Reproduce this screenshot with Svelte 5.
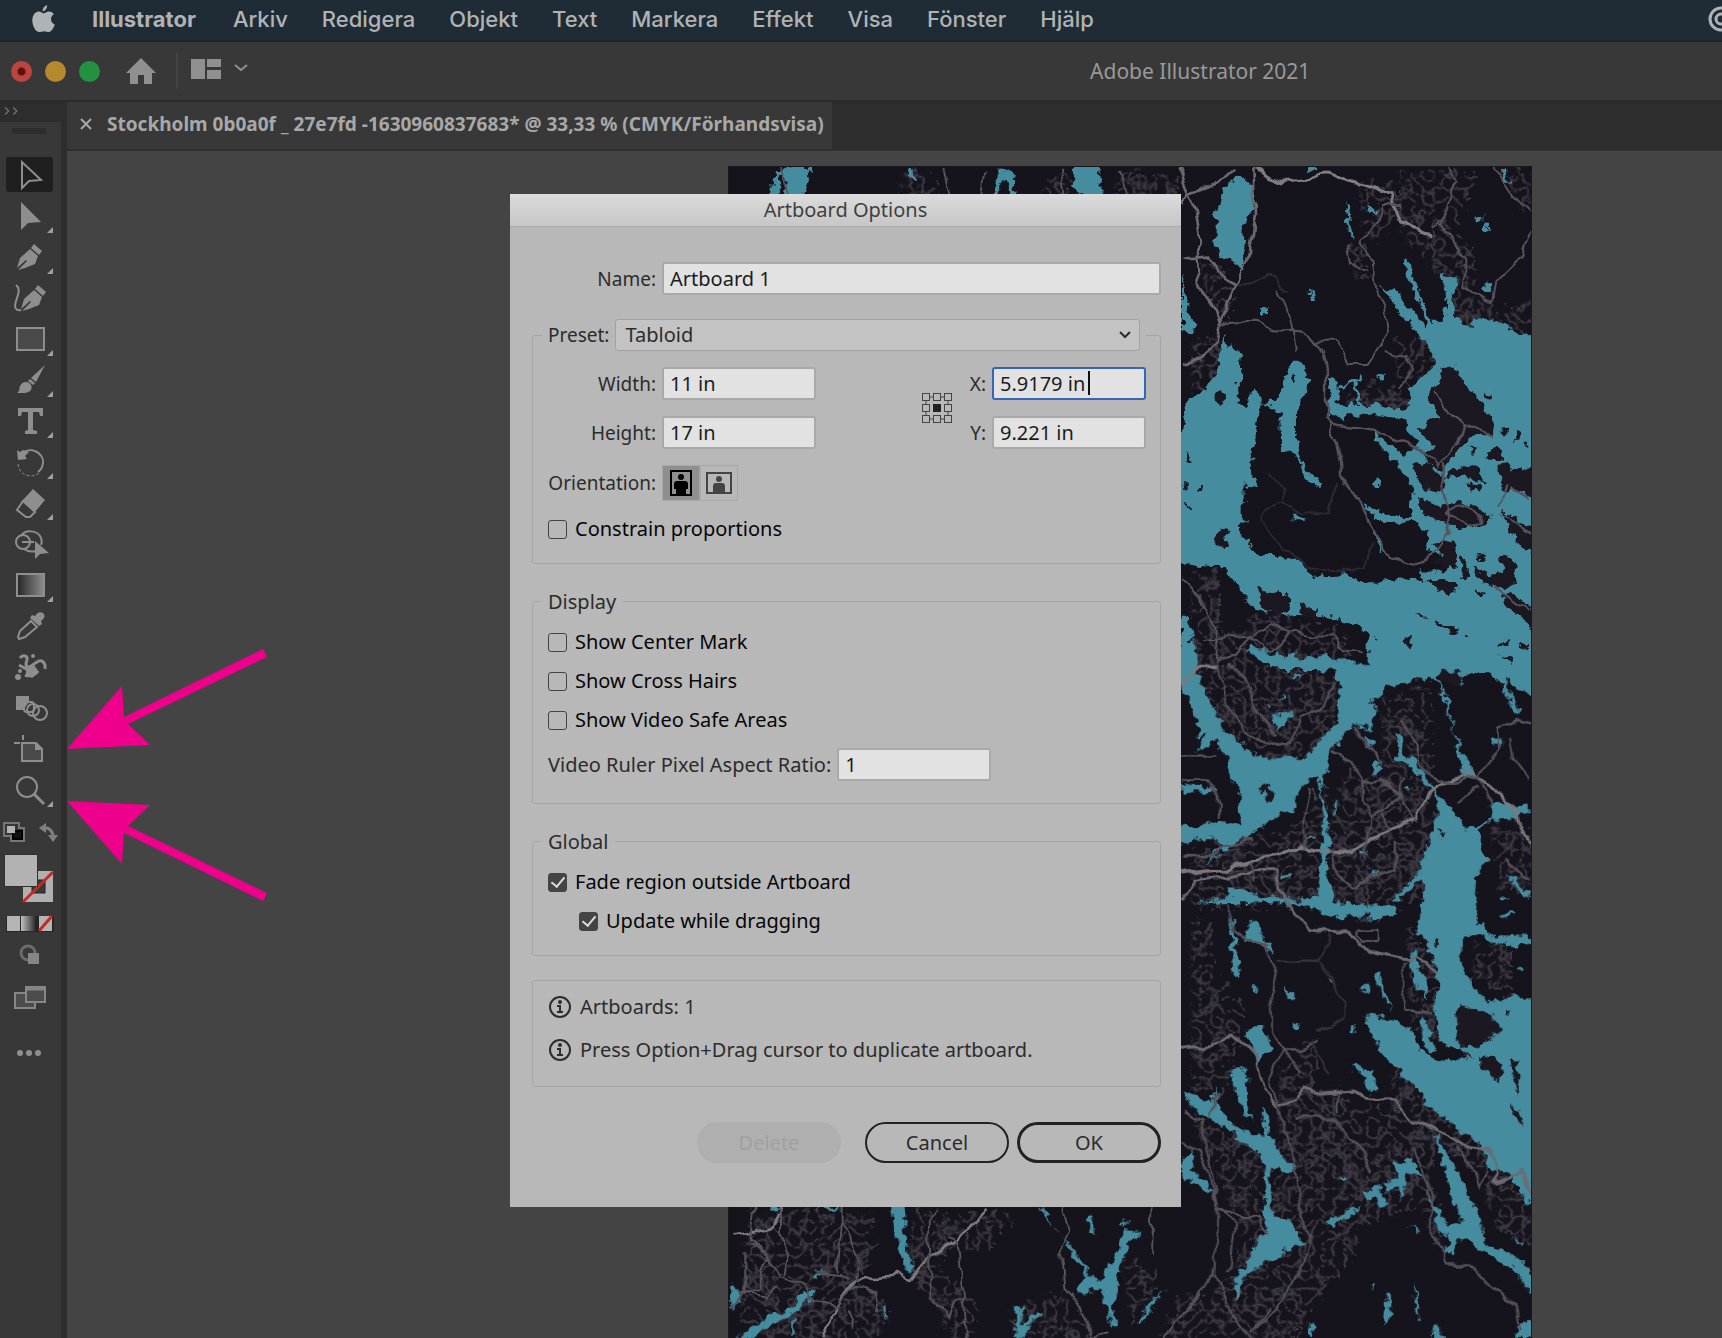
<script>
    let artboard = $state({
        name: 'Artboard 1',
        preset: 'Tabloid',
        width: '11 in',
        height: '17 in',
        x: '5.9179 in',
        y: '9.221 in',
        ratio: '1'
    });

    let orientation = $state('portrait');
    let activeTool = $state('Direct selection');

    let menus = ['Arkiv', 'Redigera', 'Objekt', 'Text', 'Markera', 'Effekt', 'Visa', 'Fönster', 'Hjälp'];
    let presets = ['Tabloid', 'Letter', 'Legal', 'A4', 'A3'];

    let display = $state([
        { label: 'Show Center Mark', on: false },
        { label: 'Show Cross Hairs', on: false },
        { label: 'Show Video Safe Areas', on: false }
    ]);
    let constrain = $state(false);
    let fade = $state(true);
    let update = $state(true);

    const nib = '<path d="M20 3l8 7-3 4-8-7z"/><path d="M16 8l8 7-3 8-10 4-7 2 9-9-1-1-9 8 3-10z"/>';

    // 32x32 icons, filled with the current colour
    const tools = [
        { name: 'Direct selection', icon: '<path d="M8 3v26l7-7 12-1z" fill="none" stroke="currentColor" stroke-width="2"/>' },
        { name: 'Selection', more: true, icon: '<path d="M7 2v28l7-7 13-1z"/>' },
        { name: 'Pen', more: true, icon: nib },
        { name: 'Curvature', icon: `<g transform="translate(4 0)">${nib}</g><path d="M2 3c5 4 2 10 0 16s-1 10 5 9" fill="none" stroke="currentColor" stroke-width="2"/>` },
        { name: 'Rectangle', more: true, icon: '<rect x="3" y="5" width="27" height="22" fill="#4a4a4a" stroke="currentColor" stroke-width="2"/>' },
        { name: 'Paintbrush', more: true, icon: '<path d="M31 1L22 18l-5-4zM16 15l5 4-2 2-5-4zM12 18c4 0 7 4 5 8-3 4-9 3-14 3 3-2 2-4 3-7 1-2 3-4 6-4z"/>' },
        { name: 'Type', more: true, icon: '<path d="M4 3h25v8h-3l-1-4h-6v18l4 1v3H11v-3l3-1V7H8l-1 4H4z"/>' },
        { name: 'Rotate', more: true, icon: '<path d="M10 6c10-6 23 4 18 15-1 3-3 4-4 5" fill="none" stroke="currentColor" stroke-width="2"/><path d="M3 4l1 10 9-1-2-3 4-4-6-2-3 2z"/><path d="M4 18c1 13 16 15 22 8" fill="none" stroke="currentColor" stroke-width="1" stroke-dasharray="3 2"/>' },
        { name: 'Eraser', more: true, icon: '<path d="M19 2l12 11-10 12L8 14z"/><path d="M9 14l12 11-5 5h-4L3 23z" fill="none" stroke="currentColor" stroke-width="2"/>' },
        { name: 'Shape builder', icon: '<g fill="none" stroke="currentColor" stroke-width="2"><circle cx="9" cy="14" r="7"/><path d="M7 8c4-7 17-6 20 2 1 3 1 5 0 7M10 21c4 3 8 3 12 2M8 14h12"/></g><path d="M21 13v18l5-5 9-1z"/>' },
        { name: 'Gradient', more: true, icon: '<defs><linearGradient id="ramp"><stop offset="0" stop-color="#262626"/><stop offset="1" stop-color="#8e8e8e"/></linearGradient></defs><rect x="3" y="5" width="27" height="22" fill="url(#ramp)" stroke="currentColor" stroke-width="2"/>' },
        { name: 'Eyedropper', icon: '<path d="M29 3c3 3 1 6-2 8l1 3-3 2-9-8 2-3 3 1c2-3 5-5 8-3z"/><path d="M17 11l6 6-12 10-6 2-1-2 2-6z" fill="none" stroke="currentColor" stroke-width="2"/>' },
        { name: 'Symbol sprayer', icon: '<path d="M6 7c3-4 8-2 7 2-2 5-1 9 4 6l6-4c4-3 9 0 8 7M5 14l9 5M11 24c5 2 10 0 13-4" fill="none" stroke="currentColor" stroke-width="3"/><path d="M12 17l8-3 5 7-7 6-6-4z"/><circle cx="19" cy="5" r="2"/><circle cx="4" cy="26" r="3"/><circle cx="6" cy="20" r="2"/>' },
        { name: 'Blend', icon: '<path d="M2 4h13v6l-6 8H2z"/><g fill="none" stroke="currentColor" stroke-width="2"><rect x="10" y="10" width="10" height="10" rx="3"/><circle cx="19" cy="18" r="6"/><circle cx="26" cy="21" r="7"/></g>' },
        { name: 'Artboard', icon: '<path d="M8 10h14l6 6v12H8z" fill="#4a4a4a" stroke="currentColor" stroke-width="2"/><path d="M21 9v8h8z"/><path d="M0 10h6M9 2v5" fill="none" stroke="currentColor" stroke-width="2"/>' },
        { name: 'Zoom', more: true, icon: '<circle cx="13" cy="13" r="10" fill="none" stroke="currentColor" stroke-width="2"/><path d="M20 20l10 10" stroke="currentColor" stroke-width="3"/>' }
    ];
</script>

<div class="screen">
    <nav class="menubar">
        <svg class="apple" viewBox="0 0 24 30" aria-hidden="true">
            <path d="M16 0c0 4-2 6-5 7 0-4 2-6 5-7zM12 9c2 0 3-2 6-2 2 0 4 1 5 3-4 2-4 9 1 11-1 4-4 8-6 8s-3-1-5-1-4 1-6 1C3 29 0 21 0 17 0 9 5 7 7 7s4 2 5 2z" />
        </svg>
        <a href="#app" class="app-name">Illustrator</a>
        {#each menus as menu}
            <a href="#{menu}">{menu}</a>
        {/each}
        <svg class="cc" viewBox="0 0 26 26" aria-hidden="true">
            <circle cx="13" cy="13" r="11" fill="none" stroke="currentColor" stroke-width="3" />
            <circle cx="13" cy="13" r="5" fill="none" stroke="currentColor" stroke-width="3" />
        </svg>
    </nav>

    <header class="titlebar">
        <div class="title-left">
            <span class="light red"></span>
            <span class="light yellow"></span>
            <span class="light green"></span>
            <svg class="home" viewBox="0 0 30 26" aria-hidden="true">
                <path d="M15 0l15 15h-4v11h-8v-9h-6v9H4V15H0z" />
            </svg>
            <span class="divider"></span>
            <svg class="workspace" viewBox="0 0 30 20" aria-hidden="true">
                <path d="M0 0h14v20H0zM16 0h14v8H16zM16 11h14v9H16z" />
            </svg>
            <svg class="caret" viewBox="0 0 14 8" aria-hidden="true">
                <path d="M1 1l6 5 6-5" fill="none" stroke="currentColor" stroke-width="2" />
            </svg>
        </div>
        <span class="title">Adobe Illustrator 2021</span>
    </header>

    <div class="workbench">
        <aside class="toolbar">
            <div class="expand">
                <svg viewBox="0 0 12 8" aria-hidden="true">
                    <path d="M1 1l3 3-3 3M8 1l3 3-3 3" fill="none" stroke="currentColor" />
                </svg>
            </div>
            <div class="panel">
                <span class="grip"></span>
                <div class="tools">
                    {#each tools as tool}
                        <button
                            class="tool"
                            class:active={activeTool === tool.name}
                            class:more={tool.more}
                            aria-label={tool.name}
                            onclick={() => (activeTool = tool.name)}
                        >
                            <svg viewBox="0 0 32 32" aria-hidden="true">{@html tool.icon}</svg>
                        </button>
                    {/each}
                </div>
                <!-- default colours, swap, fill and stroke, fill kind -->
                <svg class="swatches" viewBox="0 0 60 112" aria-hidden="true">
                    <path d="M4 2h15v5h5v13H11v-5H4z" fill="none" stroke="#777" stroke-width="2" />
                    <path d="M13 10h9v8h-9z" fill="#111" stroke="#000" stroke-width="2" />
                    <path d="M7 5h8v7H7z" fill="#b4b4b4" />
                    <path d="M43 7c6-1 10 3 10 9" fill="none" stroke="#808080" stroke-width="3" />
                    <path d="M39 7l7-5v10zM48 14h10l-5 7z" fill="#808080" />
                    <rect x="23" y="50" width="30" height="31" fill="#b0b0b0" />
                    <rect x="32" y="59" width="13" height="13" fill="#383838" stroke="#222" />
                    <path d="M23 81l30-30" stroke="#c22b25" stroke-width="3" />
                    <rect x="4" y="33" width="34" height="33" fill="#303030" />
                    <rect x="5" y="34" width="32" height="31" fill="#b2b2b2" />
                    <defs>
                        <linearGradient id="fade">
                            <stop offset="0" stop-color="#c0c0c0" />
                            <stop offset="1" stop-color="#333" />
                        </linearGradient>
                    </defs>
                    <rect x="6" y="95" width="48" height="16" fill="#262626" />
                    <rect x="7" y="95" width="13" height="15" fill="#b4b4b4" />
                    <rect x="21" y="95" width="14" height="15" fill="url(#fade)" />
                    <rect x="39" y="95" width="13" height="15" fill="#b4b4b4" />
                    <path d="M39 110l13-15" stroke="#c22b25" stroke-width="3" />
                </svg>
                <svg class="modes" viewBox="0 0 60 122" aria-hidden="true">
                    <circle cx="28" cy="12" r="7" fill="none" stroke="#6c6c6c" stroke-width="3" />
                    <path d="M28 12h11v11H28z" fill="#868686" />
                    <g fill="#4c4c4c" stroke="#868686" stroke-width="2">
                        <path d="M15 52h20v15H15z" />
                        <path d="M26 46h19v15H26z" />
                        <path d="M26 48h19" stroke-width="3" />
                    </g>
                    <g fill="#909090">
                        <circle cx="20" cy="112" r="3" />
                        <circle cx="29" cy="112" r="3" />
                        <circle cx="38" cy="112" r="3" />
                    </g>
                </svg>
            </div>
        </aside>

        <main class="document">
            <div class="tabs">
                <div class="tab">
                    <button class="close" aria-label="Close tab">
                        <svg viewBox="0 0 12 12" aria-hidden="true">
                            <path d="M1 1l10 10M11 1L1 11" stroke="currentColor" stroke-width="2" />
                        </svg>
                    </button>
                    <span>Stockholm 0b0a0f _ 27e7fd -1630960837683* @ 33,33 % (CMYK/Förhandsvisa)</span>
                </div>
            </div>

            <div class="canvas">
                <svg class="map" viewBox="728 167 804 1171" preserveAspectRatio="xMinYMin slice" role="img" aria-label="Map of Stockholm">
                    <defs>
                        <filter id="rough" x="-5%" y="-5%" width="110%" height="110%" color-interpolation-filters="sRGB">
                            <feTurbulence type="fractalNoise" baseFrequency="0.11" numOctaves="3" seed="4" />
                            <feDisplacementMap in="SourceGraphic" scale="12" xChannelSelector="R" yChannelSelector="G" />
                        </filter>
                        <filter id="wobble" x="-5%" y="-5%" width="110%" height="110%" color-interpolation-filters="sRGB">
                            <feTurbulence type="fractalNoise" baseFrequency="0.05" numOctaves="2" seed="9" />
                            <feDisplacementMap in="SourceGraphic" scale="12" xChannelSelector="R" yChannelSelector="G" />
                        </filter>
                        <!-- thin veins of noise, kept inside the blocks -->
                        <filter id="streets" x="-5%" y="-5%" width="110%" height="110%" color-interpolation-filters="sRGB">
                            <feTurbulence type="turbulence" baseFrequency="0.09" numOctaves="2" seed="7" result="noise" />
                            <feColorMatrix in="noise" values="0 0 0 0 0.25  0 0 0 0 0.23  0 0 0 0 0.27  -4 0 0 0 1.1" result="veins" />
                            <feDisplacementMap in="SourceGraphic" in2="noise" scale="24" xChannelSelector="R" yChannelSelector="G" result="blocks" />
                            <feComposite in="veins" in2="blocks" operator="in" />
                        </filter>
                    </defs>
                    <rect x="728" y="167" width="804" height="1171" fill="#15131c" />

                    <!-- built-up areas -->
                    <g filter="url(#streets)">
                        <g transform="translate(1170 150) scale(.3333)">
                            <path d="M-380 50h120l20 90h-200zM-180 50h180l-20 90h-190zM-830 50h80l40 90h-140z" />
                            <path d="M660 50h120l20 170 70 40 20 110-20 40 90 60 110-40v140l-170-40-60 0-60-170-60-60-60-80z" />
                            <path d="M760 50h130l-50 150-60-30zM970 50h110v140l-50-30zM540 90h110l20 80-90 90-40-60zM640 550l80-10 70 60-10 60-60 40-70-40z" />
                            <path d="M33 550h70l40 60-40 110-70-10zM60 310l70 20 50 80-40 80-60-70zM500 720l80-40 140 40-20 60-200-10z" />
                            <path d="M33 1250l80 0 10 180 140-60 180 40 60 20 10 100-80 100H33zM500 270h60l20 90-50 20z" />
                        </g>
                        <g transform="translate(1170 650) scale(.3333 .4388)">
                            <path d="M100 0h300l120 50-50 150-140 60-150-20-100-100zM600 100l130-30 40 180-40 80 60 40-60 180-150 50-120-10-10-260 60-60 100 0z" />
                            <path d="M33 450l300-60 110-90v270H33zM33 600h60l20 130 80 60-20 110-30 90H33zM680 600l80 100 40 170-100 0-20-150zM690 60l60 10 10 160-50-40z" />
                            <path d="M40 1060l110 10 140 50 20-120 90-20 200 50 150 20 230 110-110 10-100-50-60 130-190 50-170 180-40 70-210 -10 90-230z" />
                            <path d="M300 930l90-50 30 60-50 60-80 60zM640 920l170 100 120 100 60 80 80 50v100l-120-50-60-130-180-90-80-30zM930 390h150v160l-130-20zM880 650l110 0 10 140-120-60zM880 810l110 20-60 80-80 10z" />
                            <path d="M0 1568l130-150 120 0 240-120 60 40-130 120-90 110zM730 1130l60 150-20 80-60-140z" />
                        </g>
                        <g transform="translate(700 1190) scale(.3333)">
                            <path d="M120 50h160l200 0 20 80-40 130 80 80-50 104H90V220zM610 50h240l60 20-80 90-90-10-60 60 120 110-10 124h-60l-60-130-80-70zM890 350l120-50 80 0 60 144H920zM1240 190l100 40v90l-80 70zM1400 300h100v144h-160z" />
                        </g>
                    </g>

                    <!-- water -->
                    <g filter="url(#rough)" fill="#468c9f">
                        <g transform="translate(1170 150) scale(.3333)">
                            <path d="M-1205 140l20-75 32-15h70l-8 50-20 40h-50l5-60-15 0-15 60zM-798 50h25l5 45-12-5zM-535 140l15-80 40-8 15 88h-18l-12-50-20 10-2 40zM-300 50h85l12 90h-78z" />
                            <path d="M205 80c30 10 45 50 46 95-20 25-40 50-36 85 8 35-4 70-8 100l-22-30-45-20-7-30 2-90 17-40 8-40z" />
                            <path d="M33 370l12 80 27 95-39 5z" />
                            <path d="M20 850L45 830 42 780 55 735 110 725 120 690 145 650 150 580 155 545 168 600 195 590 212 630 208 670 200 700 205 760 225 775 245 715 272 722 268 760 255 850 250 905 238 940 245 970 268 1015 235 1010 218 1000 218 1110 205 1130 220 1165 260 1215 330 1215 400 1240 415 1275 530 1270 570 1300 700 1285 760 1290 745 1265 830 1265 850 1230 765 1195 770 1145 725 1115 640 1115 600 1095 575 1065 620 1080 645 1100 725 1102 720 1080 722 1010 690 950 630 890 608 840 650 875 690 910 720 905 745 870 720 850 695 808 620 795 560 800 470 795 478 675 500 700 500 765 620 765 700 780 722 760 710 710 740 690 790 650 790 605 740 550 690 495 632 412 690 425 700 460 740 500 765 540 755 480 700 360 705 320 720 350 745 430 778 515 818 515 825 430 805 370 860 380 860 410 845 430 850 500 910 540 905 510 960 505 1000 520 1050 555 1095 550 1095 1570 590 1570 590 1450 560 1420 470 1405 400 1390 340 1395 270 1385 240 1370 190 1290 150 1255 20 1240z" />
                            <path d="M272 755l45-5 20-50 25-65 35 0 8 30-10 25 25 0-20 40-25 40 0 90 10 60 30 50 35 30-5 15-40-25-30-80-45-10-2-110-30-15z" />
                            <path d="M500 720l70-50 5 10-60 40zM545 690l10-3 15 80-10 3zM612 685l30-15 0 20zM525 180l8-20 12 100-12-20zM412 422l12-5 8 30-10 0zM273 472h18v20h-18zM368 1100h42v14h-42zM610 990h16v18h-16zM935 425l10-35 20 15-5 20zM990 60l14 0 10 40-14-10zM914 198h20v20h-20zM938 218h16v24h-16zM412 55l16-5 0 12-16 5zM600 170l22 18-4 6-20-16zM615 1150l8 0 8 60-8-10z" />
                            <path d="M33 1390l20 20 20 100-10 60H20zM230 1490l60 25 60 5 20-25 0 30 60 5 40-20 10 20 60 15 0 15-200 0-60-20z" />
                        </g>
                        <g transform="translate(1170 650) scale(.3333 .4388)">
                            <path d="M20 0L75 0 80 60 120 120 150 170 220 220 260 245 400 248 440 210 480 180 505 150 505 80 490 50 430 40 300 35 230 5 235-10 340 20 400 22 440 10 480 20 590 35 600-20 1095-20 1095 115 1040 90 1005 60 1010 85 1050 145 1030 140 1000 85 950 45 900 50 870 75 850 60 800 60 830 110 850 190 880 240 918 290 880 295 865 240 845 180 820 110 800 70 740 60 720 75 650 85 610 110 600 130 630 135 600 155 605 180 560 170 540 175 500 215 475 235 470 280 455 300 450 330 470 390 475 440 465 500 480 540 485 570 560 580 670 580 670 605 590 615 560 605 490 612 460 600 400 580 270 575 60 575 180 565 165 535 280 560 390 570 440 560 450 480 455 420 445 310 440 290 410 300 370 330 370 370 330 375 280 400 200 440 150 460 90 500 160 440 120 425 20 445 20 395 60 405 150 390 215 395 200 370 210 330 180 290 165 230 130 210 70 240 110 190 80 200 80 160 50 110 20 80z" />
                            <path d="M678 185L690 190 700 230 730 255 800 330 860 380 880 405 920 400 960 380 965 350 1070 355 1070 370 1020 385 960 385 920 410 930 450 950 480 920 510 915 560 925 590 915 620 940 625 960 650 1095 652 1095 668 1015 675 950 660 930 645 880 655 865 710 900 760 950 800 1000 800 1020 785 1095 800 1095 1285 1010 1190 975 1185 950 1180 930 1130 860 1090 770 1035 730 990 640 930 610 890 580 840 600 828 640 840 720 860 750 910 790 935 900 930 870 905 830 905 800 870 790 790 810 760 780 700 760 660 730 640 750 610 755 550 745 500 770 450 800 370 795 335 740 285 700 250 678 245z" />
                            <path d="M665 570l40-30 40-40 5 20-40 35-40 20zM712 700l25-12 10 40 25 40-5 30-30-30zM750 835l15 5 10 40 20 35-15 5-25-30zM605 255l25 5-4 22-18 5zM580 195l18 10 10 15-20 0z" />
                            <path d="M33 300l100 15-5 10-95-5zM300 155l70-15 0 8-45 30-10 12zM330 515l28-4-5 12h-25zM487 350l12-10-5 40-5-5z" />
                            <path d="M175 610l10 0 10 60 15 55-8 25-22-10 8-20-8-60zM235 620h20l10 25 25 15 15 35-50-30-35-5zM215 880l30-25 30 0 25 55-25 10-10 25-15-15-5-35zM180 960l25-10 20 10 5 30 0 30 10 50-20-10-25-55z" />
                            <path d="M38 1005L70 1018 120 1030 130 995 140 1030 160 1060 210 1095 280 1110 275 1040 288 1050 295 1105 330 1150 378 1180 360 1190 300 1182 298 1260 315 1295 365 1300 380 1340 405 1350 385 1362 340 1365 330 1388 280 1390 240 1420 215 1440 205 1480 190 1485 195 1430 240 1380 250 1360 290 1320 275 1280 288 1220 270 1150 200 1110 120 1070 60 1040z" />
                            <path d="M33 1160l30-20 8 25-10 20 40 20 25 40-50-30-43-10z" />
                            <path d="M338 765l10 0 20 30-10 5zM240 762l20 10-10 10zM365 852h18v10h-18zM480 750l14 4-8 8zM536 858h16v10h-16zM570 765h24v10h-24zM612 735l14-5 10 40 30 50-20-15-25-40zM540 945l20-4 20 20 20-5 20 45-20 5-30-35z" />
                            <path d="M470 1300l60-20 30-14-10 20-60 26-15-4zM575 1235l50-10 25 35-25 10-10-25-25 5zM640 1215l40-10-15-45 30 15 20-20 40 45-45-5-20 55-10-25-40 5zM715 1310l28 12-4 8z" />
                            <path d="M790 1100L820 1130 880 1220 930 1300 942 1360 1000 1370 1040 1380 1095 1430 1095 1480 1050 1440 1030 1410 960 1385 900 1350 860 1340 845 1380 825 1370 835 1340 808 1330 780 1260 765 1225 800 1270 830 1310 875 1295 850 1260 810 1160zM1030 1335l30 22-10 4z" />
                            <path d="M650 1470l12 0-5 60-20 10zM725 1440l10 20 10 60-10-5zM740 1525l12-2 0 10zM415 1530l12 0 2 38h-12zM775 1568l20-35 28 35zM1040 1540l45-10v38h-50zM600 1448h8v8h-8zM505 1200h20v8h-20zM968 200h22v18h-22zM988 562h24v8h-24zM985 602l50-5 0 8-50 4zM1035 720h20v8h-20zM1000 505l40 30 38 15 0 12-50-20z" />
                            <path d="M330 105h8v8h-8zM290 120h8v8h-8zM370 58l26-4-4 10h-20zM410 425l14 0 0 10h-14zM560 456l24 0 0 8h-20zM600 500l30 5 0 6-26 0zM702 312h14v8h-14z" />
                        </g>
                        <g transform="translate(700 1190) scale(.3333)">
                            <path d="M205 50h40l-20 25zM345 50h70l-5 15-30-5zM570 50h35l10 100 18 95-10 5-30-60zM88 290h15l15 25-10 25-20 10zM330 260l30-12-10 20-18 5zM295 310l25-8 18 0-12 30-20 10-30 35-60 20-60 49-60 0 60-35 40-20 5-15 40-5 35-25zM1015 50l15 10 30 60 40 40 40 50 30 50 30 15 20-40 25-50 20-40 10-30 20 15 30 0-15 12-30 15-5 30-20 40-10 80-10 50 10 50-10 10-15-60-20-60-35 0-25 20-10-20 25-40-50-70-20-40-50-60zM1155 70l15 0 15 70-10-10-15-40zM1262 110l12-25 4 10-10 20zM1400 295l-40 40-35 65-10-5 30-60zM945 350h18l0 60 50-50 14 5-40 40-20 39h-30l10-40zM270 395h10l-2 40h-8zM545 345l8 0 8 50-8-10z" />
                        </g>
                    </g>

                    <!-- islands -->
                    <g filter="url(#rough)" fill="#1b1822">
                        <g transform="translate(1170 150) scale(.3333)">
                            <path d="M770 740l30-30 15-60 40 0 30 60 50 50 35 50-5 50-50-10-60 60-40 50-40-20-20-30 40-10-60-60 40-20 30-20z" />
                            <path d="M130 725l25 0 8 20-15 15-17-10zM362 670l14 0 0 30-12 0zM725 940l50 0 20 30 30 10-10 50-50-10-40-50zM830 970l50-25 40 15 25 40-30-5-30-20-55 10zM895 1000l35 10-5 15-28-10zM740 1040l60 25 80-10 60 30 20 15-20 25-60 10-60-15-60-30zM790 1180l60-15 15 50-10 30-40 15-20-20 20-40zM870 1220l18 10 4 60-20-10zM920 1215l16-4 2 20-16 4z" />
                            <path d="M945 905l35-10 20 20-10 15-35 0zM980 945l30-10 10 40-20 20-20-20zM1015 965l80-20v90l-56-10-50-10 10-30zM990 1080l105 60v80l-45-30-40-60zM985 1220l40-5 15 30-10 50-30 20-40-10-40-20-10-30 50 20 40-10zM1000 1325l60 30 35 40v60l-45-60-50-30zM765 1290l80 0 15 25-30 20-30-15z" />
                            <path d="M735 1388l40 20-25-4zM790 1412l75 25-10 15-65-32zM880 1452l20 16-10 0zM696 1462l30-4-6 24 0 20-16-20zM970 1486l40-12 4 8-40 12zM1044 1474l30 12 0 8-30-8zM912 1318l30 15-10 4-20-8zM942 726l24 6-4 16-20-6zM1032 846l20 4-4 16-16 0zM1052 878l14 0 0 12h-12zM994 828l12 0 2 22-12 0zM980 1514l40 10 6 12-40-14zM610 1455l12 10-4 6z" />
                            <path d="M40 900l18 20 5 20-20-15zM42 1055l20 20-4 10-18-16zM142 1135l22 0 4 35 10 20-24 20-10-20-15-10zM38 1000l12 0 0 20-10 0zM85 1005l8 0-4 22-8-4zM898 890l10 0 0 26-10-6z" />
                            <path d="M262 1315l20 10 50 5 30 20-15 30-20 15-40-10-20-15zM378 1360l30 15 30 0 0 30-30-5z" />
                        </g>
                        <g transform="translate(1170 650) scale(.3333 .4388)">
                            <path d="M265 310l35-5 5 40-20-5 0-20-15 10zM800 410l20 5-10 16zM575 600l20 0 0 12h-20z" />
                            <path d="M870 810l40 10 60 20 25 30-60 20-10 20-60-10-10-60zM920 925l50 5 30 30-20 25-40-30zM1020 935l20 0 5 80-20-30zM1020 1030l30 30 4 25-26-24zM790 660l12 4 0 10-12 0zM1004 820l10 0-2 12-8 0zM810 45l50 5 5 30-50-10z" />
                        </g>
                    </g>

                    <!-- roads -->
                    <g filter="url(#wobble)" fill="none" stroke="#56525b" stroke-linejoin="round">
                        <g transform="translate(1170 150) scale(.3333)" stroke-width="6">
                            <path d="M258 50c30 50 130 60 160 30 60-40 90 20 160 25l85 30 25 80 40 25 50 15" stroke="#807c82" stroke-width="9" />
                            <path d="M22 50l50 120 20 120-20 30 5 80 50 60 22 60-10 60-50 45-56 10M250 50l5 140-20 130-40 90-50 110M35 325l80-5 50 70 35 20M33 160l20-30 90-35 50-45" stroke="#6c686f" stroke-width="8" />
                            <path d="M150 520c60 20 90-30 130 5s60 10 110 20 70 60 75 120v140l30 70 15 60 5 70 55 50 20 60 40 60 30 50 90 15 40-25 45-60 0-50-20-110 5-60M470 820l70 10 70 10 70 30 70 25 50 50 60-60 20-60 80 30M880 820l-60-50-30-50" stroke-width="7" />
                            <path d="M320 410l30 90 20 100M440 575h60l40 70 50 0 40-60 25-40-10-70-30-70-10-70-40-60 60-60 15-50 50 0M830 50l30 50-50 120 40 60 30 50 0 80 80 50 10-60 90-90 30-90M640 600l60 20 20 40-30 50M530 290l10 60 50 10M800 220l30 20M970 50l60 90 50 50M780 230l30-20" />
                            <path d="M270 1110c40-80 100-50 130-20l70 0 25-90M290 960l50 60 0 40M270 1110l60 90 100 50 150 10 30-80M200 405c60 10 60-40 110-20l40 40" stroke="#2c2932" />
                            <path d="M33 1290l50 50 50 100 5 90 60-20 50-50M100 1470l140-10 60-40 60 30 70 10 60 0 30 40 50 10M240 1460l60 50 60-60M1020 1010l58 30M990 1090l90 60M820 1090l60-30 60 60-80-10zM970 1310l108 80M990 1070l20-70" />
                            <path d="M-1170 60l30 80M-680 60l20 80M-560 60l-10 80M-330 60l10 80M-150 60l20 80" />
                        </g>
                        <g transform="translate(1170 650) scale(.3333 .4388)" stroke-width="6">
                            <path d="M33 80l50-45 60 0M33 510l110-10 150-30 100-25 70 10 80 5 60-30 130-50 70-70 90-30 70 30 60 50 60 90 60 60 60 20" stroke="#7c787e" stroke-width="8" />
                            <path d="M33 570l40-45 180-20 60 0 10 40 90 90 120 10 50 40 130 20 20-10 60 40M33 910l110-10 40-25 70 50 20 60 45 60 50-20 35-25 40 10 100-5 60 20 70 0 50 50 90 20 80 40 70 10 20 50-15 20 40-10 40-20 30 40 40 50" stroke="#6e6a71" stroke-width="7" />
                            <path d="M180 580v60l110 40 30 60-20 70 0 60 30 40 60 50M330 910l-30 70 20 60 50 130 20 120 30 50-20 60-60 80-60 50-40 30M370 1065h120l70 60 40 70M500 1010v45M440 890l-60 20-50 0M730 1140l50 100 0 60 50 100 60 0 80 60 60 30 20 60" />
                            <path d="M33 1050l60 20 10 70 40 130-10 150-100 90M130 1420l60 100 60 60M33 1120l50 20 60 130 60 20 60 0 30 40M150 1270l40 40-20 110" />
                            <path d="M140 30l30 100 60 60 70 30 60-10 30-60 70-20 40-60M170 30l60 40 20 60 60 70M33 240h100M33 295l80 0 30 40 0 50M475 230l60 20 40 40 0 60 20 40-10 90M570 300l60-5 60 40-100 50M480 450v50l60 40 140-40 0-60M700 290l-10 40 40 60M690 160l50 60 0 40 60 40 60 0 60-10 60-60 0-50 60-20 60 10M550 180l60 60 20 20M1020 200l10 50 48 50M920 290l40 60M860 350l60-40M630 370l30 40M640 310l60 20" />
                            <path d="M250 480v50M240 430l-140 40-60 0M420 310l-20 80 0 60M430 310l10 30M700 710v110l80 10M1000 480l78 50M860 1130l70 90 20-30M300 1500l-60 60M150 1010l-40 60" />
                            <path d="M320 710l120 0 40-60M440 710l80 90 0 40-90 30M420 890l60 80" stroke="#35313b" />
                            <path d="M565 635h55l0 25-45 5-20-15z" />
                        </g>
                        <g transform="translate(700 1190) scale(.3333)" stroke-width="6">
                            <path d="M88 130l70-8 60-15 30-55M370 444l30-90 65-85 110-5 20-15 40 15 55-65 70-45 70-60 25-45" stroke="#7c787e" stroke-width="8" />
                            <path d="M160 50l-10 100 60 60 30 50 70 20 30 50 60 20M240 50v80l20 50-10 80M425 50v50l45 100 0 70M340 250l110 12M420 100l-10 150M710 50l-30 40 5 110 0 120 60 65 20-50 25-15-20-160-25-20M785 320l10 124M1090 50l20 80-30 60 10 100 50 60 30 90 50-10M1355 50l-5 140M1500 310l-60 60-50 74M150 160l50 40-30 100-50 10M90 350l40-40 70 10 30-30M130 180l0 130M400 350l60-60 60 20 10 60M440 360l20 60" />
                        </g>
                    </g>
                </svg>
            </div>
        </main>
    </div>

    <form class="dialog" onsubmit={(e) => e.preventDefault()}>
        <h1>Artboard Options</h1>
        <div class="body">
            <div class="field name">
                <label for="name">Name:</label>
                <input type="text" id="name" bind:value={artboard.name}>
            </div>

            <fieldset>
                <legend class="preset">
                    <label for="preset">Preset:</label>
                    <span class="select">
                        <select id="preset" bind:value={artboard.preset}>
                            {#each presets as preset}
                                <option>{preset}</option>
                            {/each}
                        </select>
                        <svg viewBox="0 0 14 8" aria-hidden="true">
                            <path d="M2 1l5 5 5-5" fill="none" stroke="currentColor" stroke-width="2" />
                        </svg>
                    </span>
                </legend>
                <div class="measures">
                    <div class="stack">
                        <div class="field">
                            <label for="width">Width:</label>
                            <input type="text" id="width" bind:value={artboard.width}>
                        </div>
                        <div class="field">
                            <label for="height">Height:</label>
                            <input type="text" id="height" bind:value={artboard.height}>
                        </div>
                    </div>
                    <svg class="anchor" viewBox="0 0 30 30" aria-hidden="true">
                        <g fill="none" stroke="currentColor">
                            <path d="M4 4h22v22H4z" />
                            <g fill="#b8b8b8">
                                {#each [0, 11, 22] as y}
                                    {#each [0, 11, 22] as x}
                                        <rect x={x + 0.5} y={y + 0.5} width="7" height="7" />
                                    {/each}
                                {/each}
                            </g>
                        </g>
                        <rect x="11" y="11" width="8" height="8" fill="#222" />
                    </svg>
                    <div class="stack">
                        <div class="field short">
                            <label for="x">X:</label>
                            <div class="focused">
                                <input type="text" id="x" bind:value={artboard.x}>
                            </div>
                        </div>
                        <div class="field short">
                            <label for="y">Y:</label>
                            <input type="text" id="y" bind:value={artboard.y}>
                        </div>
                    </div>
                </div>
                <div class="field orientation">
                    <span>Orientation:</span>
                    <div class="toggle">
                        <button type="button" aria-label="Portrait" class:on={orientation === 'portrait'} onclick={() => (orientation = 'portrait')}>
                            <svg viewBox="0 0 26 26" aria-hidden="true">
                                <rect x="3" y="1" width="20" height="24" fill="none" stroke="currentColor" stroke-width="2" />
                                <circle cx="13" cy="7" r="3" />
                                <path d="M9 11h8c2 0 3 1 3 3v5h-2v6H8v-6H6v-5c0-2 1-3 3-3z" />
                            </svg>
                        </button>
                        <button type="button" aria-label="Landscape" class:on={orientation === 'landscape'} onclick={() => (orientation = 'landscape')}>
                            <svg viewBox="0 0 26 26" aria-hidden="true">
                                <rect x="1" y="3" width="24" height="20" fill="none" stroke="currentColor" stroke-width="2" />
                                <circle cx="13" cy="9" r="3" />
                                <path d="M10 13h6c2 0 3 1 3 3v6H7v-6c0-2 1-3 3-3z" />
                            </svg>
                        </button>
                    </div>
                </div>
                <label class="check">
                    <input type="checkbox" bind:checked={constrain}>
                    Constrain proportions
                </label>
            </fieldset>

            <fieldset>
                <legend>Display</legend>
                <div class="checks">
                    {#each display as item}
                        <label class="check">
                            <input type="checkbox" bind:checked={item.on}>
                            {item.label}
                        </label>
                    {/each}
                </div>
                <div class="field ratio">
                    <label for="ratio">Video Ruler Pixel Aspect Ratio:</label>
                    <input type="text" id="ratio" bind:value={artboard.ratio}>
                </div>
            </fieldset>

            <fieldset>
                <legend>Global</legend>
                <div class="checks">
                    <label class="check">
                        <input type="checkbox" bind:checked={fade}>
                        Fade region outside Artboard
                    </label>
                    <label class="check nested">
                        <input type="checkbox" bind:checked={update}>
                        Update while dragging
                    </label>
                </div>
            </fieldset>

            <div class="info">
                {#each ['Artboards: 1', 'Press Option+Drag cursor to duplicate artboard.'] as line}
                    <p>
                        <svg viewBox="0 0 22 22" aria-hidden="true">
                            <circle cx="11" cy="11" r="10" fill="none" stroke="currentColor" stroke-width="2" />
                            <circle cx="11" cy="6" r="2" />
                            <path d="M8 9h4v6h2v2H8v-2h2v-4H8z" />
                        </svg>
                        {line}
                    </p>
                {/each}
            </div>

            <div class="actions">
                <button type="button" class="delete" disabled>Delete</button>
                <button type="button">Cancel</button>
                <button type="submit" class="ok">OK</button>
            </div>
        </div>
    </form>

    <svg class="arrows" viewBox="0 0 200 256" aria-hidden="true">
        <path d="M0 102L55 39l2 31L196 2l4 8-139 67 22 21z" />
        <path d="M0 154l55 63 2-31 139 68 4-8-139-67 22-21z" />
    </svg>
</div>

<style>
:global(body) {
    background-color: #444;
}
.screen {
    color: #2c2c2c;
    display: flex;
    flex-direction: column;
    font-family: "Noto Sans", "Open Sans", sans-serif;
    font-size: 20px;
    height: 100vh;
    line-height: 24px;
    min-height: 1220px;
    overflow: hidden;
    position: relative;
}
.screen * {
    box-sizing: border-box;
}
button,
input,
select {
    color: inherit;
    font: inherit;
    margin: 0;
}

.menubar {
    align-items: center;
    background-color: #202c35;
    border-bottom: 2px solid #1b242b;
    color: #b0b3b6;
    display: flex;
    flex: none;
    font-family: Inter, sans-serif;
    font-size: 22px;
    font-weight: 500;
    gap: 34px;
    height: 42px;
    padding: 0 0 2px 32px;
}
.menubar a {
    color: inherit;
    text-decoration: none;
}
.menubar .app-name {
    font-weight: 700;
    margin: 0 3px;
}
.apple {
    fill: currentColor;
    height: 28px;
    width: 23px;
}
.cc {
    flex: none;
    height: 26px;
    margin-left: auto;
    margin-right: -12px;
    width: 26px;
}

.titlebar {
    align-items: center;
    background-color: #383838;
    border-bottom: 2px solid #2b2b2b;
    color: #999;
    display: grid;
    flex: none;
    font-size: 21px;
    grid-template-columns: 39.4% 60.6%;
    height: 60px;
}
.title-left {
    align-items: center;
    display: flex;
    gap: 13px;
    padding-left: 11px;
}
.title {
    justify-self: center;
    white-space: nowrap;
}
.light {
    border-radius: 50%;
    height: 21px;
    width: 21px;
}
.red {
    background: radial-gradient(circle, #5e0f0c 3px, #bb4640 5px);
}
.yellow {
    background-color: #b58a2d;
}
.green {
    background-color: #22923f;
}
.title-left svg {
    fill: #909090;
}
.home {
    height: 26px;
    margin: 0 7px 0 13px;
    width: 30px;
}
.divider {
    background-color: #444;
    height: 36px;
    width: 2px;
}
.title-left .workspace {
    height: 20px;
    margin-bottom: 4px;
    width: 30px;
}
.title-left .caret {
    color: #909090;
    height: 8px;
    margin-bottom: 6px;
    width: 14px;
}

.workbench {
    display: flex;
    flex: 1;
    min-height: 0;
}
.toolbar {
    background-color: #2d2d2d;
    display: flex;
    flex: none;
    flex-direction: column;
    width: 67px;
}
.expand {
    color: #777;
    height: 20px;
    padding: 4px;
}
.expand svg {
    display: block;
    height: 10px;
    width: 14px;
}
.panel {
    background-color: #383838;
    flex: 1;
    margin-right: 6px;
}
.grip {
    background-color: #2d2d2d;
    display: block;
    height: 6px;
    margin: 6px 0 0 12px;
    width: 34px;
}
.tools {
    display: flex;
    flex-direction: column;
    gap: 6px;
    padding: 23px 0 0 6px;
}
.tool {
    background-color: transparent;
    border: 0;
    border-radius: 3px;
    color: #8e8e8e;
    display: grid;
    height: 35px;
    padding: 0;
    place-items: center;
    position: relative;
    width: 47px;
}
.tool.active {
    background-color: #1f1f1f;
}
.tool svg {
    fill: currentColor;
    height: 32px;
    overflow: visible;
    width: 32px;
}
.tool.more::after {
    border-bottom: 6px solid #a0a0a0;
    border-left: 6px solid transparent;
    bottom: 0;
    content: "";
    position: absolute;
    right: 0;
}
.swatches,
.modes {
    display: block;
    width: 60px;
}
.swatches {
    height: 112px;
    margin-top: 14px;
}
.modes {
    height: 122px;
    margin-top: 8px;
}

.document {
    display: flex;
    flex: 1;
    flex-direction: column;
    min-width: 0;
}
.tabs {
    background-color: #2d2d2d;
    border-bottom: 2px solid #2f2f2f;
    flex: none;
    height: 49px;
}
.tab {
    align-items: center;
    background-color: #383838;
    color: #a8a8a8;
    display: inline-flex;
    font-size: 19px;
    font-weight: 700;
    gap: 15px;
    height: 47px;
    padding: 0 8px 4px 13px;
    white-space: nowrap;
}
.close {
    background-color: transparent;
    border: 0;
    padding: 0;
}
.close svg {
    display: block;
    height: 12px;
    width: 12px;
}
.canvas {
    background-color: #444;
    display: grid;
    flex: 1;
    grid-template-columns: 661fr 804fr 190fr;
    min-height: 0;
    padding-top: 15px;
}
.map {
    border: 1px solid #18171c;
    border-bottom: 0;
    grid-column: 2;
    height: 100%;
    min-height: 0;
    width: 100%;
}

/* dialog floats over the document */
.dialog {
    background-color: #b8b8b8;
    left: 510px;
    position: absolute;
    top: 194px;
    width: 671px;
}
.dialog h1 {
    background: linear-gradient(#dcdcdc, #c6c6c6);
    border-bottom: 1px solid #acacac;
    color: #404040;
    font-size: 20px;
    font-weight: 400;
    line-height: 32px;
    margin: 0;
    text-align: center;
}
.body {
    display: flex;
    flex-direction: column;
    gap: 24px;
    padding: 35px 20px 44px 22px;
}
.field {
    align-items: center;
    display: grid;
    gap: 6px;
    grid-template-columns: 108px 154px;
}
.field > label,
.field > span,
.preset > label {
    font-size: 19px;
    justify-self: end;
    white-space: nowrap;
}
.name {
    grid-template-columns: 124px 1fr;
}
.short {
    grid-template-columns: 18px 154px;
}
input[type=text] {
    background-color: #e2e2e2;
    border: 2px solid #a9a9a9;
    border-radius: 3px;
    color: #1c1c1c;
    height: 33px;
    outline: 0;
    padding: 0 6px;
    width: 100%;
}
.focused {
    position: relative;
}
.focused input[type=text] {
    border-color: #3566b5;
}
.focused::after {
    background-color: #111;
    content: "";
    height: 24px;
    left: 96px;
    position: absolute;
    top: 4px;
    width: 2px;
}
fieldset {
    border: 1px solid #a5a5a5;
    border-radius: 3px;
    margin: 0;
    min-width: 0;
    padding: 0 14px 22px 9px;
}
legend {
    padding: 2px 6px 0;
}
fieldset > :not(legend) {
    margin-left: 6px;
}
.preset {
    align-items: center;
    display: flex;
    gap: 6px;
    padding-top: 0;
    width: 100%;
}
.select {
    flex: 1;
    position: relative;
}
.select svg {
    height: 8px;
    pointer-events: none;
    position: absolute;
    right: 8px;
    top: 12px;
    width: 14px;
}
select {
    appearance: none;
    background-color: #c3c3c3;
    border: 1px solid #a2a2a2;
    border-radius: 3px;
    display: block;
    height: 32px;
    padding: 0 9px;
    width: 100%;
}
.measures {
    align-items: center;
    display: flex;
    padding-top: 16px;
}
.stack {
    display: grid;
    gap: 16px;
}
.anchor {
    color: #444;
    height: 30px;
    margin-left: auto;
    margin-right: 16px;
    width: 30px;
}
.orientation {
    padding: 16px 0;
}
.toggle {
    display: flex;
}
.toggle button {
    background-color: transparent;
    border: 1px solid #a8a8a8;
    color: #444;
    display: grid;
    height: 36px;
    padding: 0;
    place-items: center;
    width: 38px;
}
.toggle button.on {
    background-color: #8f8f8f;
    color: #000;
}
.toggle svg {
    fill: currentColor;
    height: 26px;
    width: 26px;
}
.check {
    align-items: center;
    color: #060606;
    display: flex;
    gap: 8px;
}
.checks {
    display: grid;
    gap: 15px;
    padding-top: 16px;
}
.checks .nested {
    margin-left: 31px;
}
input[type=checkbox] {
    appearance: none;
    border: 1px solid #444;
    border-radius: 3px;
    display: grid;
    height: 19px;
    place-items: center;
    width: 19px;
}
input[type=checkbox]:checked {
    background-color: #444;
}
input[type=checkbox]:checked::after {
    border: solid #ddd;
    border-width: 0 2px 2px 0;
    content: "";
    height: 11px;
    margin-bottom: 3px;
    transform: rotate(40deg);
    width: 6px;
}
.ratio {
    grid-template-columns: auto 154px;
    justify-content: start;
    padding-top: 16px;
}
.ratio > label {
    font-size: 20px;
}
.info {
    border: 1px solid #a5a5a5;
    border-radius: 3px;
    display: grid;
    gap: 19px;
    padding: 14px 16px 24px;
}
.info p {
    align-items: center;
    display: flex;
    gap: 9px;
    margin: 0;
}
.info svg {
    fill: currentColor;
    height: 22px;
    width: 22px;
}
.actions {
    display: flex;
    gap: 8px;
    justify-content: flex-end;
    padding-top: 11px;
}
.actions button {
    background-color: transparent;
    border: 2px solid #222;
    border-radius: 21px;
    height: 41px;
    padding: 0;
    width: 144px;
}
.actions .delete {
    background-color: #afafaf;
    border-color: #afafaf;
    color: #a0a0a0;
    margin-right: 16px;
}
.actions .ok {
    border-width: 3px;
}

.arrows {
    fill: #ee008c;
    height: 256px;
    left: 67px;
    position: absolute;
    top: 647px;
    width: 200px;
}
</style>
